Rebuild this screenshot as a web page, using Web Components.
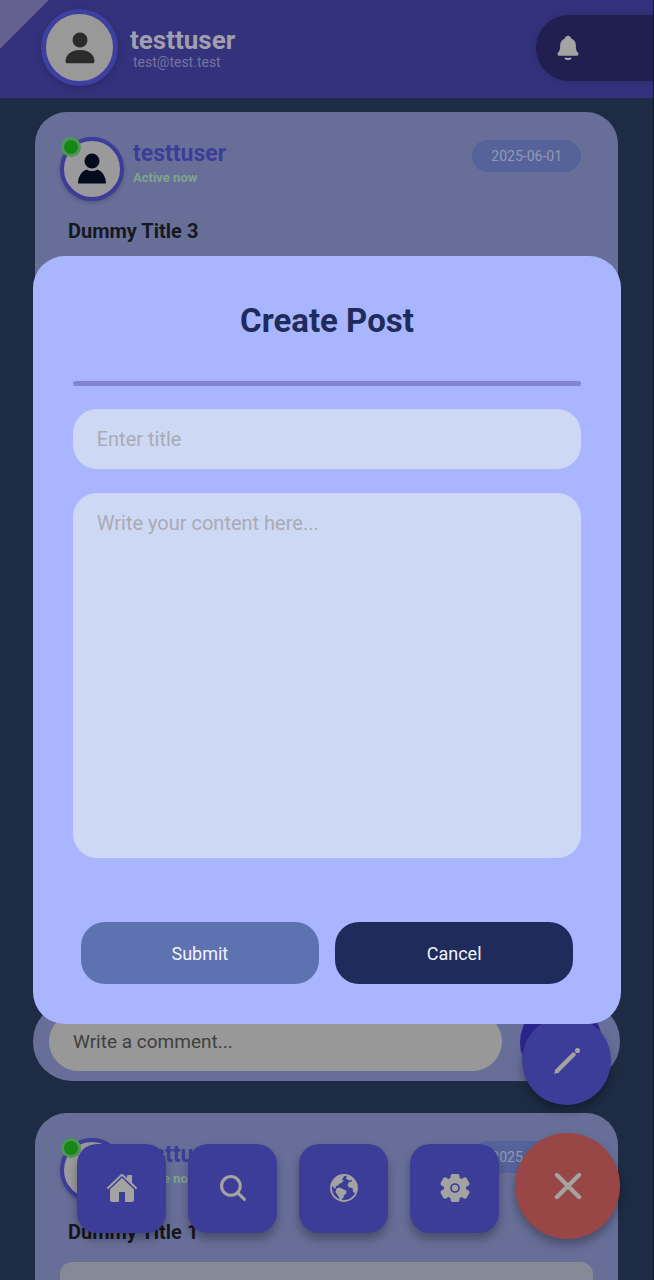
<!DOCTYPE html>
<html lang="en">
<head>
<meta charset="utf-8">
<meta name="viewport" content="width=device-width, initial-scale=1">
<title>Create Post</title>
<style>
  :root {
    --page: #1d2c44;
    --header: #34327c;
    --card: #676f99;
    --accent: #3b3d99;
    --muted-white: #999999;
    --icon: #a3a3a1;
    --modal: #a9b6ff;
    --field: #cdd8f5;
    --navy: #1e2b5b;
  }
  html, body { height: 100%; margin: 0; }
  body { background: var(--page); font-family: Roboto, "Liberation Sans", sans-serif; overflow: hidden; }
</style>
</head>
<body>
<post-app></post-app>
<script>
const define = (name, html, setup) => {
  const template = document.createElement('template');
  template.innerHTML = '<style>*{box-sizing:border-box}button,input,textarea{font-family:inherit}</style>' + html;
  customElements.define(name, class extends HTMLElement {
    constructor() {
      super();
      this.attachShadow({ mode: 'open' }).append(template.content.cloneNode(true));
    }
    connectedCallback() { if (setup) setup(this, this.shadowRoot); }
  });
};

const ICONS = {
  user: ['0 0 32 32', '<circle cx="16" cy="8" r="7.5"/><path d="M1.5 29.5C1.5 22.500 7.500 18 16 18s14.500 4.500 14.500 11.500q0 1.700-1.700 1.700H3.200q-1.700 0-1.700-1.700z"/>'],
  member: ['0 0 32 32', '<circle cx="16" cy="8" r="7.500"/><path d="M2 30.500C2 24 5.500 18.500 10.500 16.500c3.500 2 7.500 2 11 0C26.500 18.500 30 24 30 30.500z"/>'],
  bell: ['0 0 512 512', '<path d="M440.080 341.310c-1.660-2-3.290-4-4.890-5.930-22-26.610-35.310-42.670-35.310-118 0-39-9.330-71-27.720-95-13.560-17.730-31.890-31.180-56.050-41.120a3 3 0 01-.82-.67C306.600 51.490 282.820 32 256 32s-50.590 19.490-59.280 48.560a3.130 3.130 0 01-.81.65c-56.380 23.210-83.780 67.740-83.780 136.140 0 75.360-13.290 91.420-35.310 118-1.600 1.930-3.230 3.890-4.890 5.930a35.160 35.160 0 00-4.650 37.620c6.170 13 19.320 21.070 34.330 21.070H410.500c14.940 0 28-8.060 34.190-21a35.170 35.170 0 00-4.610-37.660zM256 480a80.060 80.060 0 0070.440-42.130 4 4 0 00-3.540-5.870H189.120a4 4 0 00-3.550 5.870A80.060 80.060 0 00256 480z"/>'],
  home: ['0 0 512 512', '<path d="M261.560 101.280a8 8 0 00-11.060 0L66.400 277.150a8 8 0 00-2.470 5.790L63.900 448a32 32 0 0032 32H192a16 16 0 0016-16V328a8 8 0 018-8h80a8 8 0 018 8v136a16 16 0 0016 16h96.060a32 32 0 0032-32V282.940a8 8 0 00-2.470-5.790z"/><path d="M490.910 244.150l-74.800-71.560V64a16 16 0 00-16-16h-48a16 16 0 00-16 16v32l-57.920-55.380C272.770 35.140 264.710 32 256 32c-8.680 0-16.720 3.140-22.140 8.630l-212.700 203.500c-6.220 6-7 15.870-1.340 22.370A16 16 0 0043 267.560L250.500 69.280a8 8 0 0111.060 0l207.520 198.280a16 16 0 0022.590-.44c6.140-6.360 5.630-16.860-.76-22.970z"/>'],
  search: ['0 0 512 512', '<path d="M456.690 421.390L362.600 327.300a173.810 173.810 0 0034.840-104.580C397.440 126.380 319.060 48 222.720 48S48 126.380 48 222.720s78.380 174.720 174.720 174.720A173.810 173.810 0 00327.300 362.600l94.090 94.090a25 25 0 0035.300-35.300zM97.920 222.720a124.800 124.800 0 11124.800 124.800 124.950 124.950 0 01-124.800-124.800z"/>'],
  earth: ['0 0 32 32', '<circle cx="16" cy="16" r="13" fill="none" stroke="currentColor" stroke-width="1.800"/><path d="M4.500 10.500L9 5l6-2 1 2-2 2 1.500 1.500-2 2.500-2 .5-1.500 2-2.500.5.5 2-1.500.5L3.500 13zM8.500 16.500l3-1 3.500 1.500 3.500 2-.5 3-2 1-.5 2.500-2 2-.5 2-1.500-.5-.5-4-2-2.500-1.500-2.500zM18.500 4.500l3.500-.5 4.500 4 2.500 4.500.5 4-2.500 4.500-2-1-.5-4-3.500-.5-1.500-2.500 1.500-3 3-.5-.5-1.500-2.500.5-1.500-1-1.500-1z"/>'],
  gear: ['0 0 32 32', '<circle cx="16" cy="16" r="11"/><rect x="11.500" y="2" width="9" height="28" rx="2"/><rect x="11.500" y="1" width="9" height="30" rx="2" transform="rotate(60 16 16)"/><rect x="11.500" y="1" width="9" height="30" rx="2" transform="rotate(120 16 16)"/><circle cx="16" cy="16" r="4" fill="none" stroke="#3b3d99" stroke-width="1.700"/>'],
  pencil: ['0 0 32 32', '<path d="M22.500 9.500L6.500 25.500" fill="none" stroke="currentColor" stroke-width="4.400" stroke-linecap="round"/><path d="M4.500 24.500L3.400 28q0 .9.900.8l4-1.300z"/><circle cx="26.500" cy="5.500" r="2.600"/>'],
  close: ['0 0 32 32', '<path d="M5 5L27 27M27 5L5 27" fill="none" stroke="currentColor" stroke-width="4.400" stroke-linecap="round"/>']
};

define('ui-icon', `
  <style>:host{display:block;width:32px;height:32px;color:var(--icon)}svg{display:block;width:100%;height:100%;fill:currentColor}</style>
  <svg aria-hidden="true"></svg>`, (host, root) => {
  const [box, shapes] = ICONS[host.getAttribute('name')];
  const svg = root.querySelector('svg');
  svg.setAttribute('viewBox', box);
  svg.innerHTML = shapes;
});

define('app-header', `
  <style>
    :host{display:flex;align-items:center;height:98px;flex:none;padding:0 0 3px 41px;background:linear-gradient(135deg,#63608f 34px,transparent 35px) 0 0/98px 98px no-repeat,var(--header)}
    .avatar{width:77px;height:77px;border-radius:50%;border:5px solid #3f3fa2;background:var(--muted-white);display:grid;place-items:center;box-shadow:0 2px 8px #0003}
    .avatar ui-icon{color:#2b2b2b}
    .who{flex:1;padding-left:12px}
    .name{margin:0;font-size:26px;line-height:28px;font-weight:700;color:#a09fae}
    .mail{margin:0;padding-left:3px;font-size:14px;line-height:16px;color:#7472a2}
    button{width:117px;height:66px;border:0;padding:0 0 0 18px;border-radius:33px 0 0 33px;background:#211e50;box-shadow:0 0 6px #211e5066}
    button ui-icon{width:28px;height:28px}
  </style>
  <div class="avatar"><ui-icon name="user"></ui-icon></div>
  <div class="who"><p class="name">testtuser</p><p class="mail">test@test.test</p></div>
  <button aria-label="Notifications"><ui-icon name="bell"></ui-icon></button>`);

define('post-card', `
  <style>
    :host{display:block;margin:0 35px;padding:25px;border-radius:32px;background:var(--card)}
    header{display:flex;height:64px}
    .avatar{position:relative;width:64px;height:64px;border-radius:50%;border:4px solid var(--accent);background:#9a999c;display:grid;place-items:center;box-shadow:0 2px 4px #0003}
    .avatar ui-icon{width:32px;height:32px;color:#030b1c}
    .dot{position:absolute;left:-3px;top:-4px;width:20px;height:20px;border-radius:50%;border:3px solid #4d9559;background:#168716}
    .who{flex:1;padding:3px 0 0 9px}
    .name{margin:0;font-size:23px;line-height:28px;font-weight:700;color:var(--accent)}
    .state{margin:0;font-size:13px;line-height:20px;font-weight:700;color:#80a38f}
    time{align-self:flex-start;margin:3px 12px 0 0;padding:0 19px;border-radius:16px;font-size:14px;line-height:32px;color:#9498b2;background:#56639a}
    h2{margin:0;padding:16px 8px;font-size:20px;line-height:28px;font-weight:700;color:#17181f}
    .body{min-height:72px;border-radius:12px;background:#858998}
  </style>
  <header>
    <div class="avatar"><ui-icon name="member"></ui-icon><span class="dot"></span></div>
    <div class="who"><p class="name">testtuser</p><p class="state">Active now</p></div>
    <time datetime="2025-06-01">2025-06-01</time>
  </header>
  <h2><slot></slot></h2>
  <div class="body"></div>`);

define('comment-bar', `
  <style>
    :host{display:block;margin:0 33px;border-radius:39px;background:var(--card)}
    form{display:flex;align-items:center;gap:18px;padding:10px 18px 10px 16px}
    input{flex:1;min-width:0;height:59px;padding:0 24px;border:0;border-radius:30px;background:#989898;font-size:19px;color:#333}
    input::placeholder{color:#3f3f3f;opacity:1}
    button{width:82px;height:82px;margin:-12px 0;border:0;border-radius:50%;background:#2a258c}
  </style>
  <form><input aria-label="Write a comment" placeholder="Write a comment..."><button type="button" aria-label="Send"></button></form>`);

define('nav-button', `
  <style>
    :host{display:block}
    button{display:grid;place-items:center;width:89px;height:89px;padding:0;border:0;border-radius:20px;background:var(--accent);box-shadow:0 6px 10px #0000004d}
    :host([kind=round]) button{border-radius:50%}
    :host([kind=close]) button{width:105px;height:106px;border-radius:50%;background:#984646}
  </style>
  <button></button>`, (host, root) => {
  const button = root.querySelector('button');
  const icon = document.createElement('ui-icon');
  icon.setAttribute('name', host.getAttribute('icon'));
  button.setAttribute('aria-label', host.getAttribute('label'));
  button.replaceChildren(icon);
});

define('nav-dock', `
  <style>
    :host{position:fixed;right:34px;bottom:41px;display:flex;flex-direction:column;align-items:flex-end;gap:28px}
    nav{display:flex;align-items:center;gap:16px}
    .links{display:flex;gap:22px;padding-top:4px}
    .compose{margin-right:9px}
  </style>
  <nav-button class="compose" kind="round" icon="pencil" label="New post"></nav-button>
  <nav>
    <div class="links">
      <nav-button icon="home" label="Home"></nav-button>
      <nav-button icon="search" label="Search"></nav-button>
      <nav-button icon="earth" label="Explore"></nav-button>
      <nav-button icon="gear" label="Settings"></nav-button>
    </div>
    <nav-button kind="close" icon="close" label="Close menu"></nav-button>
  </nav>`);

define('create-post-dialog', `
  <style>
    :host{position:fixed;inset:0;display:grid;place-items:center}
    form{display:flex;flex-direction:column;width:90%;height:60vh;min-height:480px;padding:40px;border-radius:32px;background:var(--modal)}
    h1{margin:0 0 35px;font-size:33px;line-height:50px;font-weight:700;text-align:center;color:var(--navy)}
    hr{width:100%;height:5px;margin:0 0 23px;border:0;border-radius:3px;background:#8385d3}
    input,textarea{display:block;width:100%;border:0;border-radius:24px;background:var(--field);font-size:20px;color:var(--navy)}
    input{height:60px;padding:0 24px;margin-bottom:24px;flex:none}
    textarea{flex:1;min-height:0;padding:18px 24px;line-height:24px;resize:none}
    ::placeholder{color:#a9abb3;opacity:1}
    footer{display:flex;gap:16px;padding:64px 8px 0}
    button{flex:1;height:62px;border:0;border-radius:24px;background:#5e71b0;color:#f1f3fb;font-size:18px}
    .cancel{background:var(--navy)}
  </style>
  <form role="dialog" aria-labelledby="heading">
    <h1 id="heading">Create Post</h1>
    <hr>
    <input aria-label="Title" placeholder="Enter title">
    <textarea aria-label="Content" placeholder="Write your content here..."></textarea>
    <footer><button type="button">Submit</button><button type="button" class="cancel">Cancel</button></footer>
  </form>`);

define('post-app', `
  <style>
    :host{display:flex;flex-direction:column;height:100vh;border-right:1px solid #0f1828}
    main{flex:1;min-height:0;overflow-y:auto;scrollbar-width:none;padding-top:14px}
    .latest{min-height:890px}
    comment-bar{margin-bottom:32px}
  </style>
  <app-header></app-header>
  <main>
    <post-card class="latest">Dummy Title 3</post-card>
    <comment-bar></comment-bar>
    <post-card>Dummy Title 1</post-card>
  </main>
  <nav-dock></nav-dock>
  <create-post-dialog></create-post-dialog>`);
</script>
</body>
</html>
